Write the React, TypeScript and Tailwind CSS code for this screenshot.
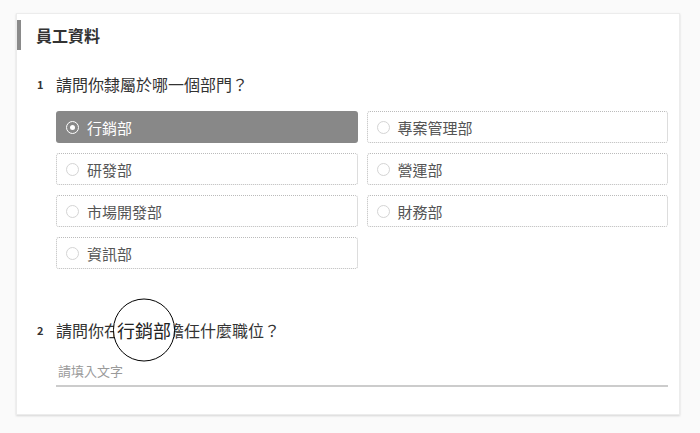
import React from "react";

const departments = [
  "行銷部",
  "專案管理部",
  "研發部",
  "營運部",
  "市場開發部",
  "財務部",
  "資訊部",
];

const Option = ({ label, selected }: { label: string; selected: boolean }) => {
  return (
    <div
      className={
        selected
          ? "flex items-center h-[32px] rounded-[3px] bg-[#888888] px-[10px] text-white"
          : "flex items-center h-[32px] rounded-[3px] border border-dotted border-[#bbbbbb] bg-white px-[9px] text-[#555555]"
      }
    >
      {selected ? (
        <span className="flex items-center justify-center w-[13px] h-[13px] rounded-full border-[1.5px] border-white">
          <span className="w-[5px] h-[5px] rounded-full bg-white" />
        </span>
      ) : (
        <span className="w-[13px] h-[13px] rounded-full border-[1.5px] border-[#d4d4d4]" />
      )}
      <span className="ml-[8px] text-[15px] leading-none">{label}</span>
    </div>
  );
};

const App = () => {
  const [selected] = React.useState<string>("行銷部");

  return (
    <div
      className="w-full h-[433px] bg-[#fafafa] pt-[13px] pl-[16px]"
      style={{ fontFamily: '"Noto Sans CJK TC", "Noto Sans", sans-serif' }}
    >
      <div className="w-[664px] h-[402px] bg-white border border-[#ececec] shadow-[0_1px_2px_rgba(0,0,0,0.15)]">
        <div className="flex items-center mt-[6px] h-[30px]">
          <div className="w-[4px] h-[30px] bg-[#8a8a8a]" />
          <h2 className="ml-[15px] text-[16px] font-bold text-[#333333]">員工資料</h2>
        </div>

        <div className="flex items-center mt-[24px] h-[20px] pl-[20px] text-[#333333]">
          <span className="w-[19px] text-[11px] font-bold">1</span>
          <span className="text-[16px]">請問你隸屬於哪一個部門？</span>
        </div>

        <div className="grid grid-cols-2 gap-x-[9px] gap-y-[10px] ml-[39px] mr-[11px] mt-[17px]">
          {departments.map((d) => (
            <Option key={d} label={d} selected={d === selected} />
          ))}
        </div>

        <div className="flex items-center mt-[51px] h-[20px] pl-[20px] text-[#333333]">
          <span className="w-[19px] text-[11px] font-bold">2</span>
          <span className="flex items-center text-[16px]">
            請問你在
            <span className="relative inline-block w-[48px] h-[20px]">
              <span className="absolute left-1/2 top-1/2 -translate-x-1/2 -translate-y-1/2 flex items-center justify-center w-[62px] h-[63px] rounded-full border-[1.5px] border-black bg-white text-[18px] text-[#222222]">
                {selected}
              </span>
            </span>
            擔任什麼職位？
          </span>
        </div>

        <div className="ml-[39px] mr-[11px] mt-[16px] h-[31px] border-b-2 border-[#cccccc] flex items-center pl-[2px]">
          <span className="text-[13px] text-[#9a9a9a]">請填入文字</span>
        </div>
      </div>
    </div>
  );
};

export default App;
